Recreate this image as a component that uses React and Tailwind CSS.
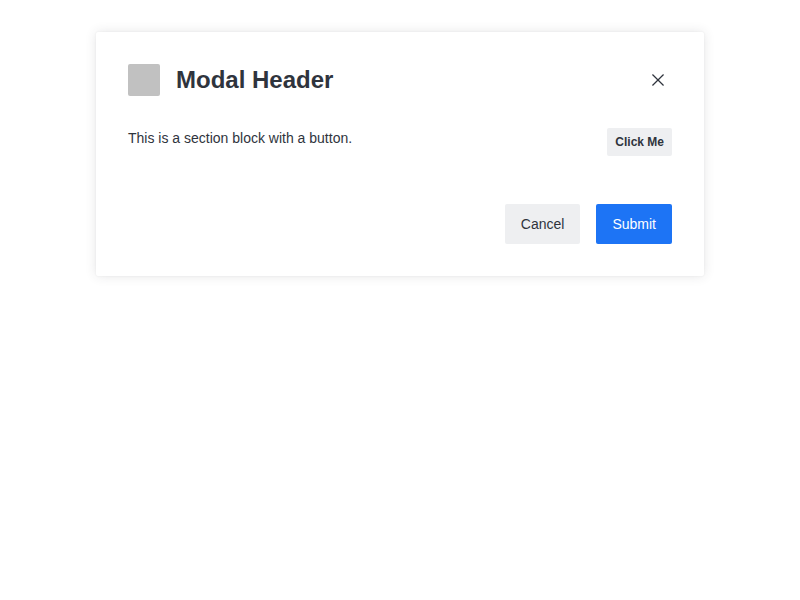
export default function App() {
  return (
    <div className="px-24 py-8 font-['Liberation_Sans',Arial,sans-serif] text-[#2f343d]">
      <div className="flex h-[244px] flex-col rounded-xs bg-white p-8 shadow-[0_0_2px_rgba(47,52,61,0.08),0_0_12px_rgba(47,52,61,0.12)]">
        <header className="flex h-8 items-center">
          <div className="size-8 rounded-xs bg-[#c1c1c1]" />
          <h1 className="ml-4 flex-1 text-2xl font-bold leading-8">Modal Header</h1>
          <button className="flex size-7 items-center justify-center" aria-label="Close">
            <svg width="20" height="20" viewBox="0 0 20 20" fill="none" stroke="#2f343d" strokeWidth="1.25">
              <path d="M4.45 4.45L15.55 15.55M15.55 4.45L4.45 15.55" />
            </svg>
          </button>
        </header>
        <section className="mt-8 flex items-start justify-between">
          <p className="text-sm leading-5">This is a section block with a button.</p>
          <button className="h-7 rounded-xs bg-[#eeeff1] px-2 text-xs font-bold leading-4">Click Me</button>
        </section>
        <footer className="mt-12 flex justify-end gap-4 text-sm leading-5">
          <button className="h-10 rounded-xs bg-[#eeeff1] px-4">Cancel</button>
          <button className="h-10 rounded-xs bg-[#1d74f5] px-4 text-white">Submit</button>
        </footer>
      </div>
    </div>
  );
}
